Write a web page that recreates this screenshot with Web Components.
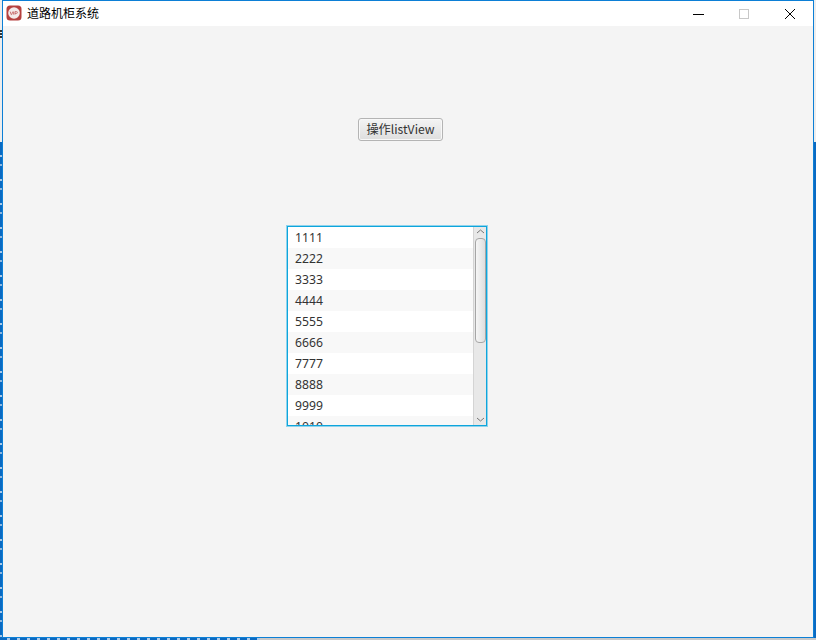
<!DOCTYPE html>
<html><head><meta charset="utf-8">
<style>
html,body{margin:0;padding:0;width:816px;height:640px;overflow:hidden;background:#fff}
</style></head><body>
<template id="t-desktop"><style>
:host{display:block;position:relative;width:816px;height:640px;overflow:hidden;background:linear-gradient(#ededed,#ededed) 0 0/816px 142px no-repeat,#0a6ac2}
.shade{position:absolute;left:260px;right:0;top:638px;height:2px;background:#c9c9c9}
.mark{position:absolute;left:0;top:30px;width:2px;height:8px;background:repeating-linear-gradient(#333 0 2px,#ededed 2px 3px)}
.specks{position:absolute;left:0;top:142px;width:2px;bottom:0;background:repeating-linear-gradient(#0a6ac2 0 13px,#a9c8e6 13px 15px,#0a6ac2 15px 22px,#8db6de 22px 24px)}
.bottom{position:absolute;left:0;width:260px;top:638px;height:2px;background:repeating-linear-gradient(90deg,#0a6ac2 0 7px,#a9c8e6 7px 10px)}
::slotted(app-window){position:absolute;left:2px;top:0}
</style><div class="mark"></div><div class="specks"></div><div class="bottom"></div><div class="shade"></div><slot></slot></template>

<template id="t-window"><style>
:host{display:flex;flex-direction:column;box-sizing:border-box;width:812px;height:638px;border:1px solid #0c7fd6;background:#f4f4f4;font-family:"Noto Sans CJK SC","Noto Sans",sans-serif}
.bar{display:flex;align-items:center;height:25px;background:#fff;flex:none}
.logo{margin-left:3px;width:16px;height:16px;flex:none;display:block;position:relative;top:-1px}
.title{margin-left:5px;font:12px/16px "Noto Sans CJK SC",sans-serif;color:#000;flex:1;position:relative;top:-1px}
.ctl{width:46px;height:25px;display:flex;align-items:center;justify-content:center;flex:none}
.ctl svg{display:block}
.body{flex:1;display:flex;flex-direction:column}
</style>
<div class="bar">
<svg class="logo" viewBox="0 0 16 16"><rect x=".5" y=".5" width="15" height="15" rx="3.5" fill="#b5403f"/><circle cx="8" cy="8" r="5.8" fill="#f4eaea"/><path d="M4.200 6.600l1 3h.5l1-3M7.600 6.600v3M9 9.600v-3h1.500a.9.900 0 0 1 0 1.800H9" fill="none" stroke="#c25a5a" stroke-width=".8"/></svg>
<span class="title"><slot name="title"></slot></span>
<div class="ctl"><svg width="12" height="12"><path d="M1 6.500h11" stroke="#000"/></svg></div>
<div class="ctl"><svg width="12" height="12"><rect x="1.500" y="1.500" width="9" height="9" fill="none" stroke="#c8c8c8"/></svg></div>
<div class="ctl"><svg width="12" height="12"><path d="M1 1l10 10M11 1L1 11" stroke="#000" fill="none"/></svg></div>
</div>
<div class="body"><slot></slot></div></template>

<template id="t-button"><style>
:host{display:block;box-sizing:border-box;width:85px;height:23px;margin:92px 0 0 355px;border:1px solid #b4b4b4;border-radius:3px;background:linear-gradient(#f4f4f4,#dedede);box-shadow:inset 0 0 0 1px #f8f8f8;color:#333;font:12.2px/20px "Noto Sans CJK SC","Noto Sans",sans-serif;text-align:center;white-space:nowrap}
</style><slot></slot></template>

<template id="t-list"><style>
:host{display:flex;box-sizing:border-box;width:200px;height:200px;margin:85px 0 0 284px;border:1px solid #0ea5dc;box-shadow:0 0 0 1px #8fd3ec;background:#fff;overflow:hidden}
.rows{flex:1;min-width:0;overflow:hidden;display:block}
.sb{width:13px;flex:none;background:#e8e8e8;border-left:1px solid #d4d4d4;box-sizing:border-box;display:flex;flex-direction:column;align-items:center}
.arrow{height:11px;flex:none;display:block}
.thumb{box-sizing:border-box;width:11px;height:105px;border:1px solid #a6a6a6;border-radius:4px;background:linear-gradient(90deg,#f6f6f6,#dedede);flex:none}
.gap{flex:1}
</style><div class="rows"><slot></slot></div>
<div class="sb">
<svg class="arrow" width="11" height="11" viewBox="0 0 11 11"><path d="M2 6l3.500-3L9 6" fill="none" stroke="#777"/></svg>
<div class="thumb"></div><div class="gap"></div>
<svg class="arrow" width="11" height="11" viewBox="0 0 11 11"><path d="M2 4l3.500 3L9 4" fill="none" stroke="#777"/></svg>
</div></template>

<template id="t-row"><style>
:host{display:block;box-sizing:border-box;height:21px;padding-left:7px;font:12.2px/21px "Noto Sans","Open Sans",sans-serif;color:#333;background:#fff}
:host(:nth-child(even)){background:#f8f8f8}
</style><slot></slot></template>

<script>
function def(name,id){customElements.define(name,class extends HTMLElement{constructor(){super();this.attachShadow({mode:'open'}).appendChild(document.getElementById(id).content.cloneNode(true));}});}
def('app-desktop','t-desktop');def('app-window','t-window');def('app-button','t-button');def('app-list','t-list');def('app-row','t-row');
</script>
<app-desktop>
<app-window><span slot="title">道路机柜系统</span>
<app-button>操作listView</app-button>
<app-list><app-row>1111</app-row><app-row>2222</app-row><app-row>3333</app-row><app-row>4444</app-row><app-row>5555</app-row><app-row>6666</app-row><app-row>7777</app-row><app-row>8888</app-row><app-row>9999</app-row><app-row>1010</app-row></app-list>
</app-window>
</app-desktop>
</body></html>
